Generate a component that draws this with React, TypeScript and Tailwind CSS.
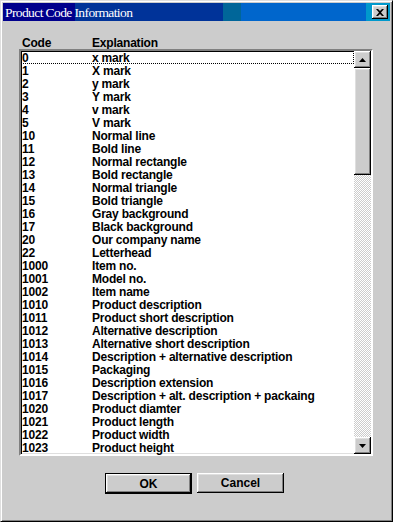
import React from "react";

const rows: [string, string][] = [
  ["0", "x mark"],
  ["1", "X mark"],
  ["2", "y mark"],
  ["3", "Y mark"],
  ["4", "v mark"],
  ["5", "V mark"],
  ["10", "Normal line"],
  ["11", "Bold line"],
  ["12", "Normal rectangle"],
  ["13", "Bold rectangle"],
  ["14", "Normal triangle"],
  ["15", "Bold triangle"],
  ["16", "Gray background"],
  ["17", "Black background"],
  ["20", "Our company name"],
  ["22", "Letterhead"],
  ["1000", "Item no."],
  ["1001", "Model no."],
  ["1002", "Item name"],
  ["1010", "Product description"],
  ["1011", "Product short description"],
  ["1012", "Alternative description"],
  ["1013", "Alternative short description"],
  ["1014", "Description + alternative description"],
  ["1015", "Packaging"],
  ["1016", "Description extension"],
  ["1017", "Description + alt. description + packaing"],
  ["1020", "Product diamter"],
  ["1021", "Product length"],
  ["1022", "Product width"],
  ["1023", "Product height"],
];

const raised =
  "bg-[#cccccc] shadow-[inset_-1px_-1px_0_#000000,inset_1px_1px_0_#ffffff,inset_-2px_-2px_0_#808080,inset_2px_2px_0_#dfdfdf]";

export default function App() {
  return (
    <div
      className="w-[393px] h-[522px] bg-[#cccccc] border border-t-[#dfdfdf] border-l-[#dfdfdf] border-r-black border-b-black shadow-[inset_1px_1px_0_#ffffff,inset_-1px_-1px_0_#808080] p-[2px] flex flex-col"
      style={{ fontFamily: '"Liberation Sans", Arial, sans-serif' }}
    >
      {/* Title bar */}
      <div className="h-[18px] flex items-center justify-between bg-[linear-gradient(to_right,#00008c_0px,#00008c_72px,#003399_72px,#003399_220px,#006699_220px,#006699_238px,#0066cc_238px,#0066cc_363px,#0099cc_363px)]">
        <span
          className="pl-[2px] text-white text-[13.5px] leading-[19px] tracking-[-0.6px]"
          style={{ fontFamily: '"Liberation Serif", "Times New Roman", serif' }}
        >
          Product Code Information
        </span>
        <div className={`w-[16px] h-[14px] mr-[2px] flex items-center justify-center ${raised}`}>
          <svg width="8" height="7" viewBox="0 0 8 7">
            <path d="M0 0h2l2 2 2-2h2L5 3.5 8 7H6L4 5 2 7H0l3-3.5z" fill="#000" />
          </svg>
        </div>
      </div>

      {/* Header */}
      <div className="mt-[15px] h-[13px] flex pl-[19px] text-[12px] leading-[14px] font-bold tracking-[-0.2px] text-black">
        <span className="w-[70px]">Code</span>
        <span>Explanation</span>
      </div>

      {/* List box */}
      <div className="ml-[16px] w-[354px] h-[407px] border-2 border-t-[#808080] border-l-[#808080] border-r-[#ffffff] border-b-[#ffffff] bg-white shadow-[inset_1px_1px_0_#000000,inset_-1px_-1px_0_#dfdfdf] flex">
        <div className="flex-1 flex flex-col">
          {rows.map(([code, text], i) => (
            <div
              key={code}
              className={`h-[13px] flex border border-dotted pt-[1px] text-[12px] leading-[11px] font-bold tracking-[-0.2px] text-black whitespace-nowrap ${
                i === 0 ? "border-black" : "border-transparent"
              }`}
            >
              <span className="w-[70px]">{code}</span>
              <span>{text}</span>
            </div>
          ))}
        </div>
        {/* Scrollbar */}
        <div className="w-[17px] flex flex-col">
          <div className={`h-[17px] flex items-center justify-center ${raised}`}>
            <svg width="7" height="4" viewBox="0 0 7 4">
              <path d="M3.5 0L7 4H0z" fill="#000" />
            </svg>
          </div>
          <div className={`h-[107px] ${raised}`} />
          <div className="flex-1 bg-[image:repeating-conic-gradient(#ffffff_0%_25%,#cccccc_0%_50%)] bg-[length:2px_2px]" />
          <div className={`h-[17px] flex items-center justify-center ${raised}`}>
            <svg width="7" height="4" viewBox="0 0 7 4">
              <path d="M0 0H7L3.5 4z" fill="#000" />
            </svg>
          </div>
        </div>
      </div>

      {/* Buttons */}
      <div className="mt-[17px] pl-[102px] flex items-start gap-[5px]">
        <div className="w-[87px] h-[21px] border border-black">
          <div className={`w-full h-full flex items-center justify-center text-[12px] font-bold text-black ${raised}`}>
            OK
          </div>
        </div>
        <div className={`w-[87px] h-[20px] flex items-center justify-center text-[12px] font-bold text-black ${raised}`}>
          Cancel
        </div>
      </div>
    </div>
  );
}
